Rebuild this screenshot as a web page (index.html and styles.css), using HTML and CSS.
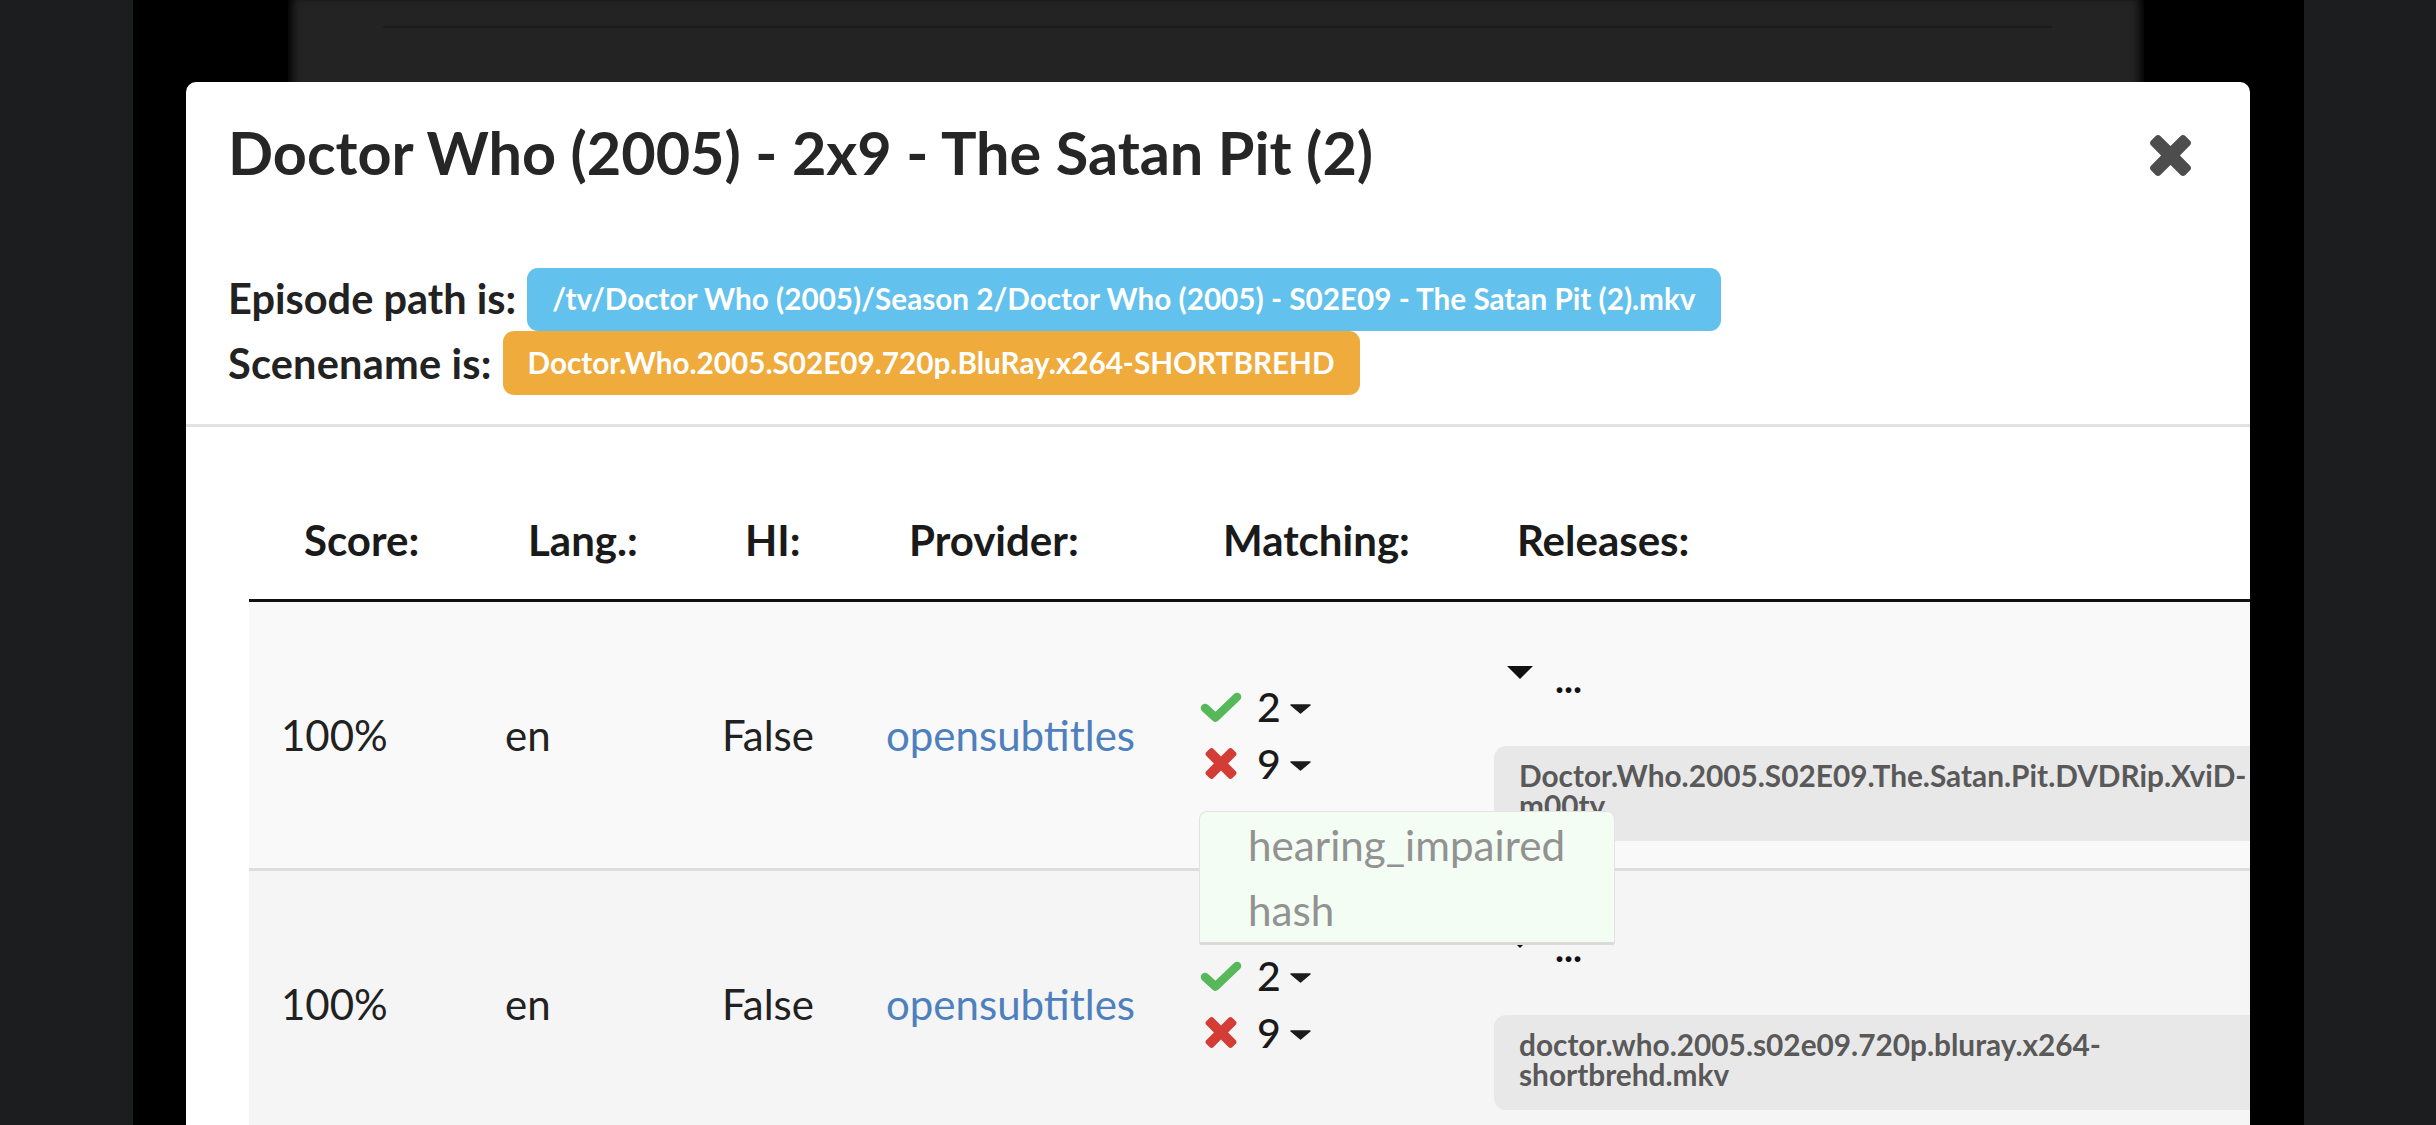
FILE: index.html
```html
<!DOCTYPE html>
<html lang="en">
<head>
<meta charset="utf-8">
<title>Doctor Who (2005) - 2x9 - The Satan Pit (2)</title>
<link rel="stylesheet" href="styles.css">
</head>
<body>
<div class="frame">
  <div class="page">
    <div class="page-line"></div>
  </div>
</div>

<div class="modal">
  <div class="modal-header">
    <div class="title-row">
      <h4 class="modal-title">Doctor Who (2005) - 2x9 - The Satan Pit (2)</h4>
      <svg class="close-icon" viewBox="110 366 1188 1188" aria-label="close"><path d="M1298 1322q0 40-28 68l-136 136q-28 28-68 28t-68-28l-294-294-294 294q-28 28-68 28t-68-28l-136-136q-28-28-28-68t28-68l294-294-294-294q-28-28-28-68t28-68l136-136q28-28 68-28t68 28l294 294 294-294q28-28 68-28t68 28l136 136q28 28 28 68t-28 68l-294 294 294 294q28 28 28 68z"/></svg>
    </div>
    <div class="info-row first">
      <span class="info-label">Episode path is:</span>
      <span class="label label-info">/tv/Doctor Who (2005)/Season 2/Doctor Who (2005) - S02E09 - The Satan Pit (2).mkv</span>
    </div>
    <div class="info-row">
      <span class="info-label">Scenename is:</span>
      <span class="label label-warning">Doctor.Who.2005.S02E09.720p.BluRay.x264-SHORTBREHD</span>
    </div>
  </div>

  <div class="modal-body">
    <table class="subs">
      <colgroup>
        <col class="c-score"><col class="c-lang"><col class="c-hi"><col class="c-prov"><col class="c-match"><col class="c-rel">
      </colgroup>
      <thead>
        <tr>
          <th>Score:</th><th>Lang.:</th><th>HI:</th><th>Provider:</th><th>Matching:</th><th>Releases:</th>
        </tr>
      </thead>
      <tbody>
        <tr class="row-odd">
          <td>100%</td>
          <td>en</td>
          <td>False</td>
          <td><a class="provider" href="#">opensubtitles</a></td>
          <td>
            <div class="match">
              <div class="match-line">
                <span class="icon-box"><svg class="check" viewBox="0 0 42 30"><path d="M5 16 L15.5 25.5 L37 5"/></svg></span>
                <span class="count">2</span>
                <svg class="caret" viewBox="0 0 21 10"><path d="M1 1 H20 L10.5 9 Z"/></svg>
              </div>
              <div class="match-line">
                <span class="icon-box"><svg class="cross" viewBox="110 366 1188 1188"><path d="M1298 1322q0 40-28 68l-136 136q-28 28-68 28t-68-28l-294-294-294 294q-28 28-68 28t-68-28l-136-136q-28-28-28-68t28-68l294-294-294-294q-28-28-28-68t28-68l136-136q28-28 68-28t68 28l294 294 294-294q28-28 68-28t68 28l136 136q28 28 28 68t-28 68l-294 294 294 294q28 28 28 68z"/></svg></span>
                <span class="count">9</span>
                <svg class="caret" viewBox="0 0 21 10"><path d="M1 1 H20 L10.5 9 Z"/></svg>
              </div>
              <ul class="dropdown">
                <li>hearing_impaired</li>
                <li>hash</li>
              </ul>
            </div>
          </td>
          <td class="rel-cell">
            <div class="rel-summary">
              <svg class="rel-tri" viewBox="0 0 26 13"><path d="M0 0 H26 L13 13 Z"/></svg>
              <span class="rel-dots">...</span>
            </div>
            <div class="rel-badge">Doctor.Who.2005.S02E09.The.Satan.Pit.DVDRip.XviD-m00ty</div>
          </td>
        </tr>
        <tr class="row-hover">
          <td>100%</td>
          <td>en</td>
          <td>False</td>
          <td><a class="provider" href="#">opensubtitles</a></td>
          <td>
            <div class="match">
              <div class="match-line">
                <span class="icon-box"><svg class="check" viewBox="0 0 42 30"><path d="M5 16 L15.5 25.5 L37 5"/></svg></span>
                <span class="count">2</span>
                <svg class="caret" viewBox="0 0 21 10"><path d="M1 1 H20 L10.5 9 Z"/></svg>
              </div>
              <div class="match-line">
                <span class="icon-box"><svg class="cross" viewBox="110 366 1188 1188"><path d="M1298 1322q0 40-28 68l-136 136q-28 28-68 28t-68-28l-294-294-294 294q-28 28-68 28t-68-28l-136-136q-28-28-28-68t28-68l294-294-294-294q-28-28-28-68t28-68l136-136q28-28 68-28t68 28l294 294 294-294q28-28 68-28t68 28l136 136q28 28 28 68t-28 68l-294 294 294 294q28 28 28 68z"/></svg></span>
                <span class="count">9</span>
                <svg class="caret" viewBox="0 0 21 10"><path d="M1 1 H20 L10.5 9 Z"/></svg>
              </div>
            </div>
          </td>
          <td class="rel-cell">
            <div class="rel-summary">
              <svg class="rel-tri" viewBox="0 0 26 13"><path d="M0 0 H26 L13 13 Z"/></svg>
              <span class="rel-dots">...</span>
            </div>
            <div class="rel-badge">doctor.who.2005.s02e09.720p.bluray.x264-shortbrehd.mkv</div>
          </td>
        </tr>
      </tbody>
    </table>
  </div>
</div>
</body>
</html>
```

FILE: styles.css
```css
* { box-sizing: border-box; }

html, body {
  margin: 0;
  padding: 0;
}

body {
  width: 2436px;
  height: 1125px;
  overflow: hidden;
  position: relative;
  background: #1c1d1f;
  font-family: "Lato", "Noto Sans", sans-serif;
  padding: 0 132px 0 133px;
}

/* page behind the modal */
.frame {
  height: 1125px;
  background: #000;
  padding: 0 160px 0 155px;
}

.page {
  height: 1125px;
  background: #232323;
  padding-top: 26px;
  box-shadow: inset 10px 0 10px -6px #000, inset -10px 0 10px -6px #000;
}

.page-line {
  height: 2px;
  margin: 0 92px 0 95px;
  background: #1b1b1b;
}

/* modal */
.modal {
  position: absolute;
  left: 186px;
  top: 82px;
  width: 2064px;
  height: 1100px;
  background: #fff;
  border-radius: 10px;
  overflow: hidden;
}

.modal-header {
  padding: 34px 59px 29px 42px;
  border-bottom: 3px solid #e2e2e2;
}

.title-row {
  display: flex;
  justify-content: space-between;
  align-items: center;
}

.modal-title {
  margin: 0;
  font-size: 59.4px;
  line-height: 72px;
  font-weight: 700;
  color: #262626;
}

.close-icon {
  width: 41px;
  height: 41px;
  margin-top: 6px;
  fill: #4d4d4d;
}

.info-row {
  display: flex;
  align-items: center;
  gap: 11px;
  height: 63px;
}

.info-row.first {
  margin-top: 80px;
}

.info-row + .info-row {
  height: 64px;
}

.info-label {
  font-size: 41.5px;
  font-weight: 700;
  color: #222;
  margin-top: -4px;
}

.info-row + .info-row .info-label {
  margin-top: 0;
  letter-spacing: 0.2px;
}

.label {
  display: flex;
  align-items: center;
  height: 100%;
  padding: 0 25px 2px 25px;
  border-radius: 11px;
  color: #fff;
  font-size: 29.7px;
  font-weight: 700;
  white-space: nowrap;
}

.label-info { background: #63c1ed; }
.label-warning { background: #f0ab3d; }

/* table */
.modal-body {
  padding: 58px 0 0 63px;
}

.subs {
  width: 2077px;
  border-collapse: collapse;
  table-layout: fixed;
}

.c-score { width: 224px; }
.c-lang { width: 217px; }
.c-hi { width: 164px; }
.c-prov { width: 314px; }
.c-match { width: 294px; }
.c-rel { width: 864px; }

.subs th {
  text-align: left;
  padding: 30px 0 34px 55px;
  font-size: 42px;
  line-height: 1.2;
  font-weight: 700;
  color: #1a1a1a;
  border-bottom: 3px solid #111;
}

.subs td {
  padding: 0 0 0 32px;
  vertical-align: middle;
  font-size: 42px;
  line-height: 1.2;
  color: #212121;
}

.row-odd { background: #f9f9f9; border-bottom: 3px solid #dddddd; }
.row-hover { background: #f5f5f5; }

.provider {
  color: #4e80be;
  text-decoration: none;
}

/* matching */
.match {
  position: relative;
}

.match-line {
  display: flex;
  align-items: center;
  height: 57px;
}

.icon-box {
  width: 57px;
  display: flex;
  align-items: center;
}

.check {
  width: 42px;
  height: 30px;
  fill: none;
  stroke: #57b85a;
  stroke-width: 8.5;
  stroke-linecap: round;
  stroke-linejoin: round;
}

.cross {
  width: 32px;
  height: 31px;
  margin-left: 5px;
  fill: #d43c36;
}

.count {
  font-size: 41px;
  line-height: 57px;
  font-weight: 500;
  color: #1a1a1a;
}

.caret {
  width: 21px;
  height: 10px;
  margin-left: 9px;
  margin-top: 4px;
  fill: #1c1c1c;
  stroke: #1c1c1c;
  stroke-width: 1.5;
  stroke-linejoin: round;
}

.dropdown {
  position: absolute;
  left: -1px;
  top: calc(100% + 19px);
  width: 416px;
  margin: 0;
  padding: 0;
  list-style: none;
  background: #f3fdf3;
  border: 1px solid #e3e3e3;
  border-bottom: 3px solid #dadada;
  border-radius: 8px 8px 2px 2px;
  z-index: 10;
}

.dropdown li {
  padding-left: 48px;
  font-size: 42.2px;
  line-height: 65px;
  color: #929292;
}

/* releases */
.subs td.rel-cell {
  padding: 30px 0 27px 32px;
}

.rel-summary {
  display: flex;
  align-items: flex-start;
  height: 114px;
  padding-top: 34px;
}

.rel-tri {
  width: 26px;
  height: 13px;
  margin-left: 13px;
  fill: #111;
}

.rel-dots {
  margin-left: 22px;
  margin-top: -7px;
  font-size: 38px;
  line-height: 1;
  font-weight: 700;
  color: #111;
}

.rel-badge {
  width: 800px;
  height: 95px;
  padding: 15px 50px 19px 25px;
  background: #e8e8e8;
  border-radius: 12px;
  font-size: 29.8px;
  line-height: 30px;
  font-weight: 700;
  color: #595959;
}
```
